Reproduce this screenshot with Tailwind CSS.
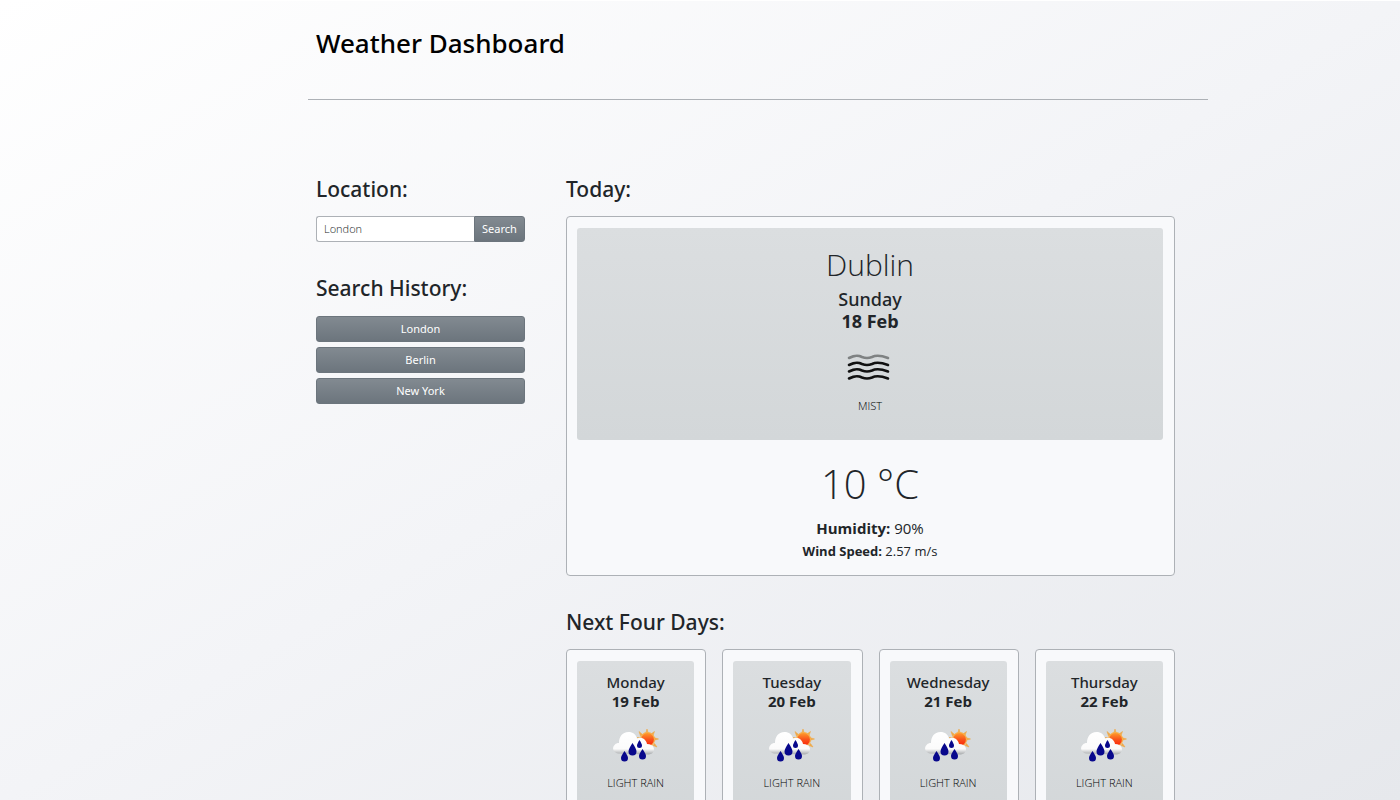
<!DOCTYPE html>
<html lang="en">
<head>
<meta charset="utf-8">
<meta name="viewport" content="width=device-width, initial-scale=1">
<title>Weather Dashboard</title>
<script src="https://cdn.jsdelivr.net/npm/@tailwindcss/browser@4"></script>
</head>
<body class="min-h-screen border-t border-white bg-[linear-gradient(to_bottom_right,#ffffff,#f3f4f7_50%,#e6e8ec)] bg-fixed font-['Open_Sans',sans-serif] text-[#212529]">
<svg class="absolute h-0 w-0" aria-hidden="true">
  <defs>
    <linearGradient id="cloud" x1="0" y1="0" x2="0" y2="1"><stop offset="0" stop-color="#fff"/><stop offset=".75" stop-color="#fbfbfb"/><stop offset="1" stop-color="#a6a9ab"/></linearGradient>
    <linearGradient id="sun" x1="0" y1="0" x2="0" y2="1"><stop offset="0" stop-color="#ffa02e"/><stop offset=".5" stop-color="#f9531c"/><stop offset="1" stop-color="#fb2008"/></linearGradient>
    <symbol id="rain" viewBox="0 0 50 50">
      <path d="M36 7l1.200 4h-2.400zM28 9.500l3.500 3-2 1.500zM43.500 9.500l-1.500 4-2-1.500zM47.500 17l-4 1.200v-2.400zM46 25l-4-1.500 1.500-2zM26 15.500l4 .5v2z" fill="#efa94a" stroke="#efa94a" stroke-width=".6"/>
      <circle cx="36.500" cy="17.500" r="7" fill="url(#sun)" stroke="#f8b04c" stroke-width="1.200"/>
      <path d="M7 31.500c-5-1-6.500-6-3-9 1-1 2-1.500 4-1.500 0-6 3-11 9.500-11 4.500 0 7.500 2.500 8.500 6.500 5-2 9 1 10 5.500 7 0 9 6 5 9.500l-3 1z" fill="url(#cloud)"/>
      <path d="M21.500 21q4 6 4 8.500a4 4 0 0 1-8 0q0-2.500 4-8.500zM13.500 29q3.500 5 3.500 7a3.500 3.500 0 0 1-7 0q0-2 3.500-7zM31.500 27q3.500 5 3.500 7a3.500 3.500 0 0 1-7 0q0-2 3.500-7zM28.500 18q2.500 4 2.500 5.500a2.500 2.500 0 0 1-5 0q0-1.500 2.500-5.500z" fill="#08088c"/>
    </symbol>
  </defs>
</svg>
<div class="ml-[22%] max-w-[900px]">
  <header class="border-b border-[#adb1b6] px-2 pt-[23px] pb-9">
    <h1 class="font-['Noto_Sans',sans-serif] text-[26px] leading-[39px] font-medium text-black">Weather Dashboard</h1>
  </header>
  <main class="flex gap-[41px] pt-[74px] pr-[33px] pl-2">
    <aside class="w-[209px] shrink-0">
      <form onsubmit="return false">
        <label for="city" class="block font-['Noto_Sans',sans-serif] text-[21px] leading-[30px] font-medium">Location:</label>
        <div class="mt-3 flex h-[26px]">
          <input id="city" type="text" placeholder="London" class="w-0 flex-1 rounded-l-[3px] border border-r-0 border-[#adb1b6] bg-white px-[7px] text-[11px] font-light text-[#212529] placeholder:text-[#212529] placeholder:opacity-100">
          <button type="submit" class="w-[51px] rounded-r-[3px] border border-[#6c757d] bg-linear-to-b from-[#828a91] to-[#6c757d] font-['Noto_Sans',sans-serif] text-[11px] text-white">Search</button>
        </div>
      </form>
      <h2 class="mt-[31px] font-['Noto_Sans',sans-serif] text-[21px] leading-[30px] font-medium">Search History:</h2>
      <div class="mt-[13px] flex flex-col gap-[5px] font-['Noto_Sans',sans-serif] text-[11px] text-white">
        <button type="button" class="h-[26px] rounded-[3px] border border-[#6c757d] bg-linear-to-b from-[#828a91] to-[#6c757d]">London</button>
        <button type="button" class="h-[26px] rounded-[3px] border border-[#6c757d] bg-linear-to-b from-[#828a91] to-[#6c757d]">Berlin</button>
        <button type="button" class="h-[26px] rounded-[3px] border border-[#6c757d] bg-linear-to-b from-[#828a91] to-[#6c757d]">New York</button>
      </div>
    </aside>
    <div class="min-w-0 flex-1">
      <section>
        <h2 class="font-['Noto_Sans',sans-serif] text-[21px] leading-[30px] font-medium">Today:</h2>
        <article class="mt-3 rounded-[4px] border border-[#adb1b6] bg-[#f8f9fb] pt-[11px] pr-[11px] pb-3 pl-[10px] text-center">
          <div class="rounded-[3px] bg-linear-to-b from-[#dbdee0] to-[#d3d7d9] pt-4 pb-[25px]">
            <h3 class="text-[30px] leading-[42px] font-light">Dublin</h3>
            <p class="mt-[2px] font-['Noto_Sans',sans-serif] text-[18px] leading-[22px] font-medium">Sunday</p>
            <p class="text-[18px] leading-[22px] font-bold">18 Feb</p>
            <svg class="mx-auto mt-[10px] h-[50px] w-[50px]" viewBox="0 0 50 50" fill="none" stroke="#111" stroke-width="2.600" stroke-linecap="round" role="img" aria-label="Mist">
              <path d="M4 16c6-3 9-3 13-1 4 1.500 6 1.500 10 0 4-2 8-2 16 1" stroke="#7f8283"/>
              <path d="M4 23c6-3 9-3 13-1 4 1.500 6 1.500 10 0 4-2 8-2 16 1M4 29.500c6-3 9-3 13-1 4 1.500 6 1.500 10 0 4-2 8-2 16 1M4 36.500c6-3 9-3 13-1 4 1.500 6 1.500 10 0 4-2 8-2 16 1"/>
            </svg>
            <p class="mt-[5px] text-[11px] leading-[18px] font-light text-black">MIST</p>
          </div>
          <p class="mt-[14px] text-[40px] leading-[60px] font-light">10 °C</p>
          <p class="mt-[2px] text-[15px] leading-6"><strong>Humidity:</strong> 90%</p>
          <p class="text-[13px] leading-[23px]"><strong>Wind Speed:</strong> 2.57 m/s</p>
        </article>
      </section>
      <section class="mt-[31px]">
        <h2 class="font-['Noto_Sans',sans-serif] text-[21px] leading-[30px] font-medium">Next Four Days:</h2>
        <div class="mt-3 grid grid-cols-4 gap-4 text-center">
          <article class="rounded-[4px] border border-[#adb1b6] bg-[#f8f9fb] pt-[11px] pr-[11px] pb-3 pl-[10px]">
            <div class="rounded-[3px] bg-linear-to-b from-[#dbdee0] to-[#d3d7d9] pt-3 pb-6">
              <h3 class="font-['Noto_Sans',sans-serif] text-[15px] leading-[19px] font-medium">Monday</h3>
              <p class="text-[15px] leading-[19px] font-bold">19 Feb</p>
              <svg class="mx-auto mt-[11px] h-[50px] w-[50px]" role="img" aria-label="Light rain"><use href="#rain"/></svg>
              <p class="mt-[2px] text-[11px] leading-[18px] font-light text-black">LIGHT RAIN</p>
            </div>
          </article>
          <article class="rounded-[4px] border border-[#adb1b6] bg-[#f8f9fb] pt-[11px] pr-[11px] pb-3 pl-[10px]">
            <div class="rounded-[3px] bg-linear-to-b from-[#dbdee0] to-[#d3d7d9] pt-3 pb-6">
              <h3 class="font-['Noto_Sans',sans-serif] text-[15px] leading-[19px] font-medium">Tuesday</h3>
              <p class="text-[15px] leading-[19px] font-bold">20 Feb</p>
              <svg class="mx-auto mt-[11px] h-[50px] w-[50px]" role="img" aria-label="Light rain"><use href="#rain"/></svg>
              <p class="mt-[2px] text-[11px] leading-[18px] font-light text-black">LIGHT RAIN</p>
            </div>
          </article>
          <article class="rounded-[4px] border border-[#adb1b6] bg-[#f8f9fb] pt-[11px] pr-[11px] pb-3 pl-[10px]">
            <div class="rounded-[3px] bg-linear-to-b from-[#dbdee0] to-[#d3d7d9] pt-3 pb-6">
              <h3 class="font-['Noto_Sans',sans-serif] text-[15px] leading-[19px] font-medium">Wednesday</h3>
              <p class="text-[15px] leading-[19px] font-bold">21 Feb</p>
              <svg class="mx-auto mt-[11px] h-[50px] w-[50px]" role="img" aria-label="Light rain"><use href="#rain"/></svg>
              <p class="mt-[2px] text-[11px] leading-[18px] font-light text-black">LIGHT RAIN</p>
            </div>
          </article>
          <article class="rounded-[4px] border border-[#adb1b6] bg-[#f8f9fb] pt-[11px] pr-[11px] pb-3 pl-[10px]">
            <div class="rounded-[3px] bg-linear-to-b from-[#dbdee0] to-[#d3d7d9] pt-3 pb-6">
              <h3 class="font-['Noto_Sans',sans-serif] text-[15px] leading-[19px] font-medium">Thursday</h3>
              <p class="text-[15px] leading-[19px] font-bold">22 Feb</p>
              <svg class="mx-auto mt-[11px] h-[50px] w-[50px]" role="img" aria-label="Light rain"><use href="#rain"/></svg>
              <p class="mt-[2px] text-[11px] leading-[18px] font-light text-black">LIGHT RAIN</p>
            </div>
          </article>
        </div>
      </section>
    </div>
  </main>
</div>
</body>
</html>
